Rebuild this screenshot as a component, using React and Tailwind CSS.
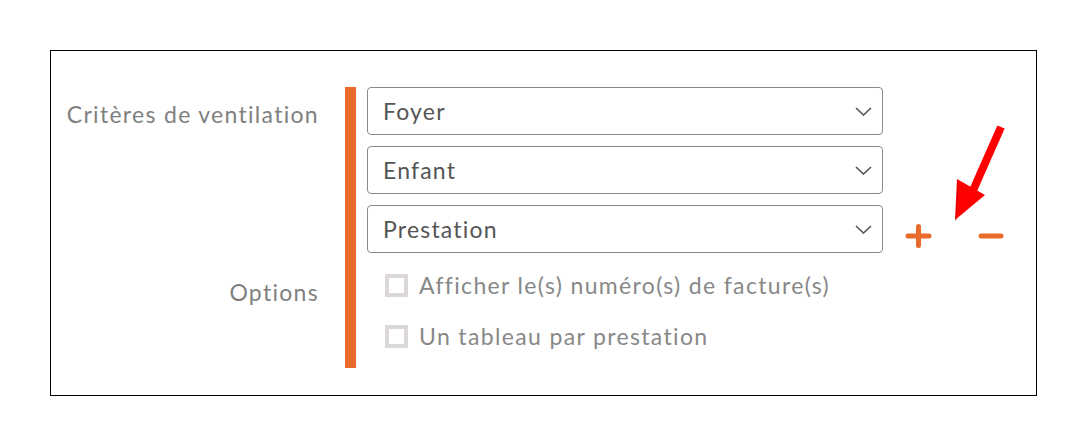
import React from 'react';

const font = { fontFamily: '"Century Gothic", Lato, "Open Sans", sans-serif' };

function Chevron() {
  return (
    <svg className="w-[17px] h-[9px]" viewBox="0 0 17 9" fill="none" stroke="#555" strokeWidth="1.6">
      <path d="M1 1l7.5 7 7.5-7" />
    </svg>
  );
}

function Select({ value }) {
  return (
    <div className="w-[516px] h-[48px] border border-[#8a8a8a] rounded-[4px] flex items-center justify-between pl-[15px] pr-[10px] bg-white">
      <span className="text-[23px] text-[#555] tracking-[1.2px]">{value}</span>
      <Chevron />
    </div>
  );
}

function Check({ label }) {
  return (
    <div className="flex items-center h-[24px]">
      <span className="w-[23px] h-[23px] border-[4px] border-[#dcd8d8] bg-white ml-[18px]" />
      <span className="ml-[11px] text-[23px] text-[#888] tracking-[1.35px]">{label}</span>
    </div>
  );
}

export default function App() {
  return (
    <div className="w-[1087px] h-[446px] bg-white pt-[50px] pl-[50px]" style={font}>
      <div className="relative w-[987px] h-[346px] border border-black flex pt-[36px]">
        <div className="w-[268px] flex flex-col items-end text-[23px] text-[#808080] tracking-[1.3px]">
          <div className="mt-[3px] h-[48px] flex items-center">Critères de ventilation</div>
          <div className="mt-[139px] h-[30px] flex items-center">Options</div>
        </div>

        <div className="ml-[26px] w-[11px] h-[281px] bg-[#e86b2b]" />

        <div className="ml-[11px] flex flex-col">
          <Select value="Foyer" />
          <div className="mt-[11px]"><Select value="Enfant" /></div>
          <div className="mt-[11px] flex items-center">
            <Select value="Prestation" />
            <svg className="ml-[22px] mt-[14px] w-[27px] h-[24px]" viewBox="0 0 27 24" stroke="#e86b2b" strokeWidth="5" strokeLinecap="round">
              <path d="M3 12h21M13.5 2.5v19" />
            </svg>
            <svg className="ml-[46px] mt-[14px] w-[26px] h-[24px]" viewBox="0 0 26 24" stroke="#e86b2b" strokeWidth="5" strokeLinecap="round">
              <path d="M3 12h20" />
            </svg>
          </div>
          <div className="mt-[20px] flex flex-col gap-[27px]">
            <Check label="Afficher le(s) numéro(s) de facture(s)" />
            <Check label="Un tableau par prestation" />
          </div>
        </div>

        <svg className="absolute left-[900px] top-[72px] w-[55px] h-[102px]" viewBox="0 0 55 102">
          <path d="M50 4L20 72" stroke="#ff0000" strokeWidth="8" strokeLinecap="butt" />
          <path d="M4 97L6 56L34 72Z" fill="#ff0000" />
          <path d="M5 98L7 60" stroke="#700" strokeWidth="1" opacity="0.3" />
        </svg>
      </div>
    </div>
  );
}
